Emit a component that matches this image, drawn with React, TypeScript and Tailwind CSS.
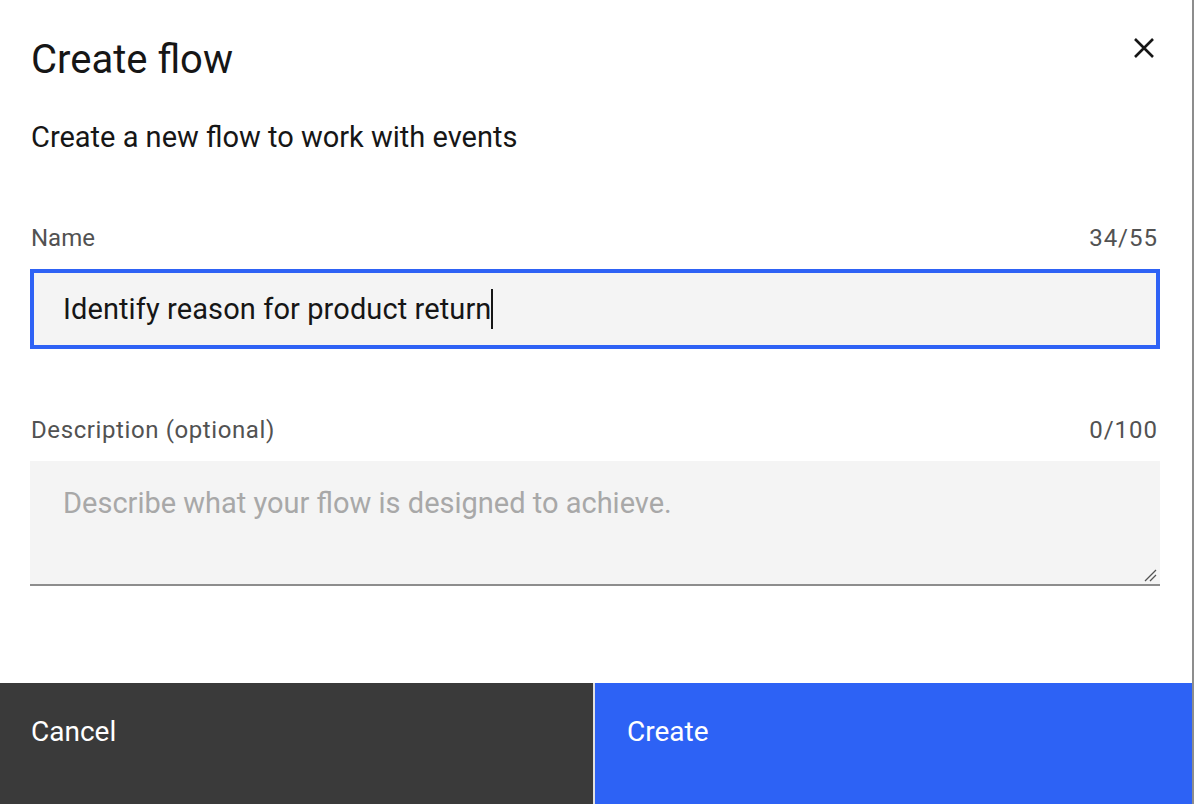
import React from "react";

export default function App() {
  const font = { fontFamily: "Roboto, 'Noto Sans', sans-serif" };
  return (
    <div className="w-[1194px] h-[804px] bg-white flex" style={font}>
      <div className="w-[1192px] h-[804px] flex flex-col bg-white">
        {/* Header */}
        <div className="flex items-start justify-between pl-[31px] pr-[24px] pt-[24px]">
          <h2 className="mt-[12px] text-[40px] leading-[48px] text-[#161616] font-normal">Create flow</h2>
          <button className="w-12 h-12 flex items-center justify-center" aria-label="Close">
            <svg width="22" height="22" viewBox="0 0 22 22" fill="none">
              <path d="M2 2 L20 20 M20 2 L2 20" stroke="#161616" strokeWidth="2.6" strokeLinecap="butt" />
            </svg>
          </button>
        </div>
        <p className="pl-[31px] mt-[35px] text-[29px] leading-[36px] text-[#161616]">
          Create a new flow to work with events
        </p>

        {/* Name field */}
        <div className="pl-[30px] pr-[32px] mt-[67px] flex flex-col">
          <div className="flex justify-between pl-[1px] pr-[2px] text-[24px] leading-[32px] text-[#525252]">
            <span>Name</span>
            <span className="tracking-[1px]">34/55</span>
          </div>
          <div className="mt-[15px] h-[80px] bg-[#f4f4f4] border-4 border-[#2e62f5] flex items-center pl-[29px]">
            <span className="text-[29px] leading-[36px] text-[#161616] tracking-[0.1px]">Identify reason for product return</span>
            <span className="w-[2px] h-[40px] bg-[#161616]" />
          </div>
        </div>

        {/* Description field */}
        <div className="pl-[30px] pr-[32px] mt-[65px] flex flex-col">
          <div className="flex justify-between pl-[1px] pr-[2px] text-[24px] leading-[32px] text-[#525252]">
            <span className="tracking-[0.6px]">Description (optional)</span>
            <span className="tracking-[1px]">0/100</span>
          </div>
          <div className="relative mt-[15px] h-[125px] bg-[#f4f4f4] border-b-2 border-[#8d8d8d] pl-[33px] pt-[24px]">
            <span className="text-[29px] leading-[36px] text-[#a8a8a8]">
              Describe what your flow is designed to achieve.
            </span>
            <svg className="absolute right-[3px] bottom-[2px]" width="14" height="14" viewBox="0 0 14 14" fill="none">
              <path d="M2 13 L13 2 M7 13 L13 7" stroke="#525252" strokeWidth="1.3" />
            </svg>
          </div>
        </div>

        {/* Footer */}
        <div className="mt-auto h-[121px] flex">
          <button className="w-[593px] h-full bg-[#3a3a3a] text-white text-[28px] leading-[36px] text-left pl-[31px] pt-[31px] flex items-start">
            Cancel
          </button>
          <div className="w-[2px] h-full bg-[#e0e0e0]" />
          <button className="flex-1 h-full bg-[#2d62f5] text-white text-[28px] leading-[36px] text-left pl-[32px] pt-[31px] flex items-start">
            Create
          </button>
        </div>
      </div>
      <div className="w-[2px] h-[804px] bg-[#8d8d8d]" />
    </div>
  );
}
